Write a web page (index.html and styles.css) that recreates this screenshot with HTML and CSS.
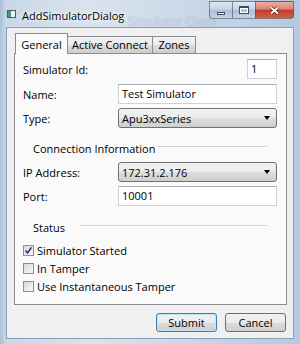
FILE: index.html
```html
<!DOCTYPE html>
<html lang="en">
  <head>
    <meta charset="UTF-8" />
    <title>AddSimulatorDialog</title>
    <link rel="stylesheet" href="styles.css">
  </head>
  <body>
    <div class="window">
      <div class="ghost">Simulator Client</div>
      <div class="titlebar">
        <svg class="app-icon" width="9" height="8" viewBox="0 0 9 8">
          <rect x="0.5" y="0.5" width="8" height="7" fill="#f2f5f7" stroke="#4f5966" />
          <rect x="1" y="1" width="3" height="6" fill="#3b9c7c" />
        </svg>
        <span class="title">AddSimulatorDialog</span>
        <div class="caption">
          <span class="cbtn min"><i></i></span>
          <span class="cbtn max"><i></i></span>
          <span class="cbtn close">
            <svg width="11" height="9" viewBox="0 0 11 9">
              <path d="M2 1.5 L9 7.5 M9 1.5 L2 7.5" stroke="#5b2118" stroke-width="3.4" />
              <path d="M2 1.5 L9 7.5 M9 1.5 L2 7.5" stroke="#fff" stroke-width="1.8" />
            </svg>
          </span>
        </div>
      </div>

      <div class="client">
        <div class="tabs">
          <div class="tab active">General</div>
          <div class="tab t-active">Active Connect</div>
          <div class="tab t-zones">Zones</div>
        </div>

        <div class="panel">
          <div class="row first">
            <span class="label">Simulator Id:</span>
            <span class="field short">1</span>
          </div>
          <div class="row">
            <span class="label">Name:</span>
            <span class="field">Test Simulator</span>
          </div>
          <div class="row">
            <span class="label">Type:</span>
            <span class="combo">Apu3xxSeries<i class="arrow"></i></span>
          </div>

          <div class="group conn">Connection Information</div>
          <div class="row">
            <span class="label">IP Address:</span>
            <span class="combo">172.31.2.176<i class="arrow"></i></span>
          </div>
          <div class="row">
            <span class="label">Port:</span>
            <span class="field">10001</span>
          </div>

          <div class="group status">Status</div>
          <div class="check">
            <span class="box">
              <svg width="9" height="9" viewBox="0 0 9 9">
                <path d="M1.6 4.6 L3.6 7 L7.4 1.4" fill="none" stroke="#23308a" stroke-width="1.6" />
              </svg>
            </span>
            Simulator Started
          </div>
          <div class="check"><span class="box"></span>In Tamper</div>
          <div class="check"><span class="box"></span>Use Instantaneous Tamper</div>
        </div>

        <div class="actions">
          <button class="btn default">Submit</button>
          <button class="btn">Cancel</button>
        </div>
      </div>
    </div>
  </body>
</html>
```

FILE: styles.css
```css
* {
  box-sizing: border-box;
}
body {
  margin: 0;
  font-family: "Open Sans", "Noto Sans", sans-serif;
  font-size: 11px;
  color: #000;
}

/* window frame */
.window {
  position: relative;
  width: 300px;
  height: 344px;
  display: flex;
  flex-direction: column;
  padding: 0 6px 5px 6px;
  overflow: hidden;
  background: linear-gradient(to right, #a9c0da 0, #c9d7e7 6px, #d9e3ee 30%, #cbd9e8 60%, #b4c9e0 100%);
}
.ghost {
  position: absolute;
  left: 128px;
  top: 13px;
  font-size: 12px;
  color: rgba(80, 95, 120, 0.22);
  filter: blur(1.1px);
}
.titlebar {
  position: relative;
  height: 27px;
  display: flex;
  align-items: flex-start;
}
.app-icon {
  margin: 10px 0 0 1px;
}
.title {
  margin: 8px 0 0 6px;
  line-height: 16px;
  text-shadow: 0 0 5px #fff, 0 0 3px #fff;
}
.caption {
  margin-left: auto;
  margin-top: 1px;
  display: flex;
  height: 18px;
}
.cbtn {
  display: flex;
  align-items: center;
  justify-content: center;
  width: 23px;
  border: 1px solid rgba(60, 78, 105, 0.6);
  border-right: none;
  background: linear-gradient(#dfe8f2, #c8d6e6 45%, #aebfd5 50%, #c0d2e6);
}
.cbtn.min {
  border-radius: 0 0 0 4px;
  align-items: flex-end;
  padding-bottom: 3px;
}
.cbtn.min i {
  width: 8px;
  height: 3px;
  background: #fff;
  border: 1px solid #3f4d60;
}
.cbtn.max i {
  width: 10px;
  height: 8px;
  border: 1px solid #3f4d60;
  border-top-width: 2px;
  box-shadow: inset 0 0 0 1px #fff;
  background: transparent;
}
.cbtn.close {
  width: 39px;
  border-right: 1px solid rgba(60, 78, 105, 0.6);
  border-radius: 0 0 4px 0;
  background: linear-gradient(#eab0a4, #d98473 45%, #c23a2a 50%, #d15e48);
}

/* client area */
.client {
  flex: 1;
  display: flex;
  flex-direction: column;
  padding: 5px 6px 6px 7px;
  border: 1px solid #8d9db2;
  background: #f0f0f0;
}
.tabs {
  display: flex;
  align-items: flex-end;
  height: 20px;
  margin-left: 1px;
  position: relative;
  z-index: 1;
}
.tab {
  height: 17px;
  line-height: 16px;
  text-align: center;
  border: 1px solid #898c95;
  border-bottom: none;
  margin-left: -1px;
  background: linear-gradient(#f3f3f3, #ebebeb 50%, #dddddd 50%, #cdcdcd);
}
.tab.active {
  width: 53px;
  height: 21px;
  padding-top: 3px;
  margin-left: 0;
  margin-bottom: -1px;
  background: #fbfbfb;
}
.t-active {
  width: 86px;
}
.t-zones {
  width: 44px;
}
.panel {
  flex: 1;
  display: flex;
  flex-direction: column;
  padding: 5px 9px 0 8px;
  border: 1px solid #898c95;
  background: #fafafa;
}
.row {
  display: flex;
  align-items: center;
  height: 20px;
  margin-bottom: 4px;
}
.row.first {
  margin-bottom: 5px;
}
.label {
  width: 95px;
}
.field {
  flex: 1;
  height: 20px;
  padding: 0 3px;
  line-height: 18px;
  background: #fff;
  border: 1px solid #cdd2d9;
  border-top-color: #abadb3;
}
.field.short {
  flex: none;
  width: 30px;
  margin-left: auto;
}
.combo {
  flex: 1;
  height: 20px;
  display: flex;
  align-items: center;
  justify-content: space-between;
  padding: 0 6px 0 3px;
  border: 1px solid #707070;
  border-radius: 3px;
  background: linear-gradient(#f2f2f2, #ebebeb 50%, #dddddd 50%, #cfcfcf);
}
.arrow {
  width: 0;
  height: 0;
  border-left: 3.5px solid transparent;
  border-right: 3.5px solid transparent;
  border-top: 4px solid #000;
}
.group {
  display: flex;
  align-items: center;
  height: 16px;
  margin: 8px 10px 6px 10px;
}
.group::after {
  content: "";
  flex: 1;
  margin-top: -2px;
  border-top: 1px solid #cfd6dc;
  border-bottom: 1px solid #fff;
}
.group.conn::after {
  margin-left: 3px;
}
.group.status {
  margin-top: 9px;
}
.group.status::after {
  margin-left: 14px;
}
.check {
  display: flex;
  align-items: center;
  height: 18px;
}
.box {
  width: 11px;
  height: 11px;
  margin-right: 3px;
  display: flex;
  align-items: center;
  justify-content: center;
  border: 1px solid #8e8f8f;
  background: linear-gradient(135deg, #d8dbe0, #f7f7f7);
}

/* dialog buttons */
.actions {
  display: flex;
  justify-content: flex-end;
  gap: 8px;
  margin-top: 8px;
  padding-right: 1px;
}
.btn {
  width: 61px;
  height: 19px;
  padding: 0;
  font: inherit;
  line-height: 16px;
  color: #000;
  border: 1px solid #707070;
  border-radius: 3px;
  background: linear-gradient(#f2f2f2, #ebebeb 50%, #dddddd 50%, #cfcfcf);
}
.btn.default {
  border-color: #3c7fb1;
  box-shadow: inset 0 0 0 1px #bfe3f7;
}
```
